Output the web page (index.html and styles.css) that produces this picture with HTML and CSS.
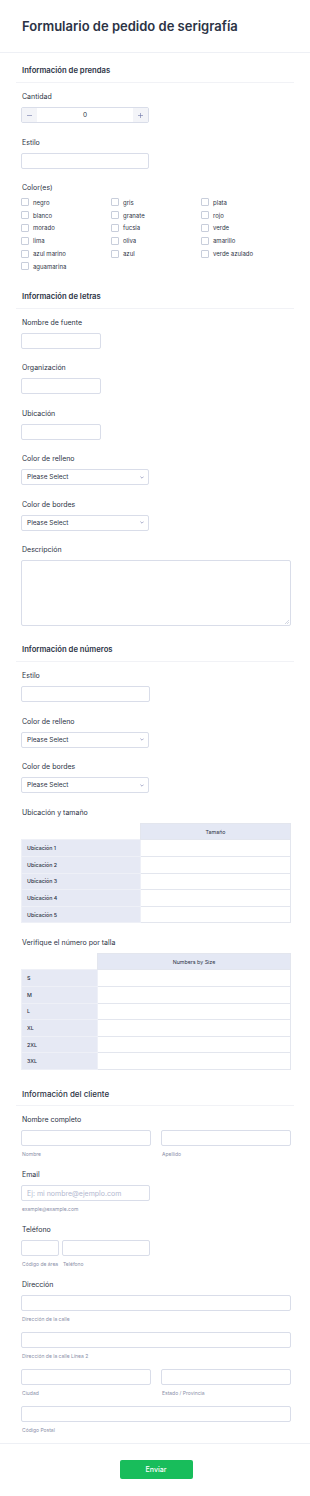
FILE: index.html
```html
<!DOCTYPE html>
<html lang="es">
<head>
    <meta charset="UTF-8">
    <meta name="viewport" content="width=device-width, initial-scale=1.0">
    <title>Formulario de pedido de serigrafía</title>
    <link rel="stylesheet" href="styles.css">
</head>
<body>
    <div class="form">
        <header class="form-header">
            <h1 class="form-title">Formulario de pedido de serigrafía</h1>
        </header>

        <!-- Prendas -->
        <section class="section">
            <h2 class="section-head">Información de prendas</h2>
            <div class="field">
                <label class="field-label">Cantidad</label>
                <div class="spinner">
                    <span class="spin-btn">
                        <svg width="5" height="5" viewBox="0 0 5 5"><path d="M0 2.5 H5" stroke="#6f76a7" stroke-width="0.6"/></svg>
                    </span>
                    <span class="spin-value">0</span>
                    <span class="spin-btn">
                        <svg width="5" height="5" viewBox="0 0 5 5"><path d="M0 2.5 H5 M2.5 0 V5" stroke="#6f76a7" stroke-width="0.6"/></svg>
                    </span>
                </div>
            </div>
            <div class="field">
                <label class="field-label">Estilo</label>
                <input class="text-input w-md" type="text">
            </div>
            <div class="field">
                <label class="field-label tight">Color(es)</label>
                <div class="check-grid">
                    <label class="check"><span class="box"></span>negro</label>
                    <label class="check"><span class="box"></span>gris</label>
                    <label class="check"><span class="box"></span>plata</label>
                    <label class="check"><span class="box"></span>blanco</label>
                    <label class="check"><span class="box"></span>granate</label>
                    <label class="check"><span class="box"></span>rojo</label>
                    <label class="check"><span class="box"></span>morado</label>
                    <label class="check"><span class="box"></span>fucsia</label>
                    <label class="check"><span class="box"></span>verde</label>
                    <label class="check"><span class="box"></span>lima</label>
                    <label class="check"><span class="box"></span>oliva</label>
                    <label class="check"><span class="box"></span>amarillo</label>
                    <label class="check"><span class="box"></span>azul marino</label>
                    <label class="check"><span class="box"></span>azul</label>
                    <label class="check"><span class="box"></span>verde azulado</label>
                    <label class="check"><span class="box"></span>aguamarina</label>
                </div>
            </div>
        </section>

        <!-- Letras -->
        <section class="section">
            <h2 class="section-head">Información de letras</h2>
            <div class="field">
                <label class="field-label">Nombre de fuente</label>
                <input class="text-input w-sm" type="text">
            </div>
            <div class="field">
                <label class="field-label">Organización</label>
                <input class="text-input w-sm" type="text">
            </div>
            <div class="field">
                <label class="field-label">Ubicación</label>
                <input class="text-input w-sm" type="text">
            </div>
            <div class="field">
                <label class="field-label">Color de relleno</label>
                <div class="select-box">Please Select
                    <svg class="chevron" width="4" height="3" viewBox="0 0 4 3"><path d="M0.4 0.6 L2 2.2 L3.6 0.6" fill="none" stroke="#6f76a7" stroke-width="0.6"/></svg>
                </div>
            </div>
            <div class="field">
                <label class="field-label">Color de bordes</label>
                <div class="select-box">Please Select
                    <svg class="chevron" width="4" height="3" viewBox="0 0 4 3"><path d="M0.4 0.6 L2 2.2 L3.6 0.6" fill="none" stroke="#6f76a7" stroke-width="0.6"/></svg>
                </div>
            </div>
            <div class="field">
                <label class="field-label">Descripción</label>
                <textarea class="text-area"></textarea>
            </div>
        </section>

        <!-- Números -->
        <section class="section">
            <h2 class="section-head">Información de números</h2>
            <div class="field">
                <label class="field-label">Estilo</label>
                <input class="text-input w-md2" type="text">
            </div>
            <div class="field">
                <label class="field-label">Color de relleno</label>
                <div class="select-box">Please Select
                    <svg class="chevron" width="4" height="3" viewBox="0 0 4 3"><path d="M0.4 0.6 L2 2.2 L3.6 0.6" fill="none" stroke="#6f76a7" stroke-width="0.6"/></svg>
                </div>
            </div>
            <div class="field">
                <label class="field-label">Color de bordes</label>
                <div class="select-box">Please Select
                    <svg class="chevron" width="4" height="3" viewBox="0 0 4 3"><path d="M0.4 0.6 L2 2.2 L3.6 0.6" fill="none" stroke="#6f76a7" stroke-width="0.6"/></svg>
                </div>
            </div>
            <div class="field">
                <label class="field-label">Ubicación y tamaño</label>
                <table class="matrix">
                    <colgroup><col class="col-loc"><col></colgroup>
                    <tr><th class="corner"></th><th class="col-head">Tamaño</th></tr>
                    <tr><th class="row-head">Ubicación 1</th><td></td></tr>
                    <tr><th class="row-head">Ubicación 2</th><td></td></tr>
                    <tr><th class="row-head">Ubicación 3</th><td></td></tr>
                    <tr><th class="row-head">Ubicación 4</th><td></td></tr>
                    <tr><th class="row-head">Ubicación 5</th><td></td></tr>
                </table>
            </div>
            <div class="field">
                <label class="field-label">Verifique el número por talla</label>
                <table class="matrix">
                    <colgroup><col class="col-size"><col></colgroup>
                    <tr><th class="corner"></th><th class="col-head">Numbers by Size</th></tr>
                    <tr><th class="row-head">S</th><td></td></tr>
                    <tr><th class="row-head">M</th><td></td></tr>
                    <tr><th class="row-head">L</th><td></td></tr>
                    <tr><th class="row-head">XL</th><td></td></tr>
                    <tr><th class="row-head">2XL</th><td></td></tr>
                    <tr><th class="row-head">3XL</th><td></td></tr>
                </table>
            </div>
        </section>

        <!-- Cliente -->
        <section class="section client">
            <h2 class="section-head light">Información del cliente</h2>
            <div class="field">
                <label class="field-label">Nombre completo</label>
                <div class="two-col">
                    <div>
                        <input class="text-input" type="text">
                        <span class="sub-label">Nombre</span>
                    </div>
                    <div>
                        <input class="text-input" type="text">
                        <span class="sub-label">Apellido</span>
                    </div>
                </div>
            </div>
            <div class="field">
                <label class="field-label">Email</label>
                <input class="text-input w-md2" type="email" placeholder="Ej: mi nombre@ejemplo.com">
                <span class="sub-label">example@example.com</span>
            </div>
            <div class="field">
                <label class="field-label">Teléfono</label>
                <div class="phone-row">
                    <div>
                        <input class="text-input" type="text">
                        <span class="sub-label">Código de área</span>
                    </div>
                    <div>
                        <input class="text-input" type="text">
                        <span class="sub-label">Teléfono</span>
                    </div>
                </div>
            </div>
            <div class="field">
                <label class="field-label">Dirección</label>
                <div class="address">
                    <div>
                        <input class="text-input" type="text">
                        <span class="sub-label">Dirección de la calle</span>
                    </div>
                    <div>
                        <input class="text-input" type="text">
                        <span class="sub-label">Dirección de la calle Línea 2</span>
                    </div>
                    <div class="two-col">
                        <div>
                            <input class="text-input" type="text">
                            <span class="sub-label">Ciudad</span>
                        </div>
                        <div>
                            <input class="text-input" type="text">
                            <span class="sub-label">Estado / Provincia</span>
                        </div>
                    </div>
                    <div>
                        <input class="text-input" type="text">
                        <span class="sub-label">Código Postal</span>
                    </div>
                </div>
            </div>
        </section>

        <footer class="form-footer">
            <button class="submit-btn">Enviar</button>
        </footer>
    </div>
</body>
</html>
```

FILE: styles.css
```css
* {
    box-sizing: border-box;
}

body {
    margin: 0;
    font-family: 'Inter', 'Noto Sans', sans-serif;
    color: #2c3345;
    background: #fff;
}

.form-header {
    height: 53px;
    padding: 17px 22px 0;
    border-bottom: 1px solid #eef0f5;
}

.form-title {
    margin: 0;
    font-size: 13px;
    line-height: 18px;
    font-weight: 600;
}

.section {
    padding: 0 16px 6px;
}

.section-head {
    margin: 0;
    padding: 12px 6px 5px;
    border-bottom: 1px solid #f1f2f6;
    font-size: 7.7px;
    line-height: 12px;
    font-weight: 600;
}

.section-head.light {
    font-size: 8px;
    font-weight: 500;
}

.field {
    margin-top: 14.5px;
    padding: 0 3px 0 5px;
}

.client .field {
    margin-top: 12px;
}

.section-head + .field {
    margin-top: 9px;
}

.field-label {
    display: block;
    margin: 0 0 5px 1px;
    font-size: 7px;
    line-height: 10px;
    font-weight: 400;
}

.field-label.tight {
    margin-bottom: 3px;
}

.text-input {
    display: block;
    width: 100%;
    height: 16px;
    margin: 0;
    padding: 0 5px;
    border: 1px solid #d9dde9;
    border-radius: 2px;
    background: #fff;
    font-family: inherit;
    font-size: 7px;
    color: #2c3345;
    outline: none;
}

.text-input::placeholder {
    color: #b3b8cf;
}

.w-sm {
    width: 80px;
}

.w-md {
    width: 128px;
}

.w-md2 {
    width: 129px;
}

.spinner {
    display: flex;
    width: 128px;
    height: 16px;
    border: 1px solid #d9dde9;
    border-radius: 2px;
    overflow: hidden;
}

.spin-btn {
    width: 15px;
    display: flex;
    align-items: center;
    justify-content: center;
    background: #f3f4f8;
}

.spin-value {
    flex: 1;
    text-align: center;
    font-size: 6.5px;
    line-height: 14px;
}

.check-grid {
    display: grid;
    grid-template-columns: repeat(3, 90px);
    grid-auto-rows: 12.8px;
}

.check {
    display: flex;
    align-items: center;
    gap: 4px;
    font-size: 6px;
    color: #2c3345;
}

.box {
    width: 8px;
    height: 8px;
    border: 1px solid #c8cedb;
    border-radius: 1px;
    background: #fff;
}

.select-box {
    display: flex;
    align-items: center;
    justify-content: space-between;
    width: 128px;
    height: 16px;
    padding: 0 4px 0 5px;
    border: 1px solid #d9dde9;
    border-radius: 2px;
    font-size: 6.5px;
    font-weight: 400;
}

.text-area {
    display: block;
    width: 100%;
    height: 66px;
    margin: 0;
    border: 1px solid #d9dde9;
    border-radius: 2px;
    outline: none;
    resize: none;
    background:
        linear-gradient(135deg, transparent 50%, #d4d8e3 50%, #d4d8e3 62%, transparent 62%, transparent 75%, #d4d8e3 75%, #d4d8e3 87%, transparent 87%) no-repeat right 1px bottom 1px / 4px 4px,
        #fff;
}

.matrix {
    width: 100%;
    border-collapse: collapse;
    font-size: 5.3px;
    font-weight: 400;
    color: #2c3345;
}

.col-loc {
    width: 119px;
}

.col-size {
    width: 76px;
}

.matrix th,
.matrix td {
    height: 16.6px;
    padding: 0;
    border: 1px solid #e3e6ee;
}

.matrix .corner {
    border: none;
    background: #fff;
}

.matrix .col-head {
    background: #e4e8f4;
    font-weight: 400;
    text-align: center;
}

.matrix .row-head {
    padding-left: 5px;
    background: #e6e9f4;
    font-weight: 500;
    text-align: left;
    border-color: #eef0f7;
}

.two-col {
    display: grid;
    grid-template-columns: 1fr 1fr;
    column-gap: 10px;
}

.phone-row {
    display: grid;
    grid-template-columns: 38px 88px;
    column-gap: 3px;
}

.address {
    display: flex;
    flex-direction: column;
    gap: 9px;
}

.sub-label {
    display: block;
    margin-top: 4px;
    padding-left: 1px;
    font-size: 5px;
    line-height: 8px;
    color: #8a8fa8;
}

.form-footer {
    margin-top: 3px;
    padding: 12px 0 17px;
    border-top: 1px solid #eef0f5;
    text-align: center;
}

.submit-btn {
    width: 73px;
    height: 19px;
    margin-left: 2px;
    border: none;
    border-radius: 2px;
    background: #18bd5b;
    color: #fff;
    font-family: inherit;
    font-size: 7px;
    font-weight: 500;
}
```
